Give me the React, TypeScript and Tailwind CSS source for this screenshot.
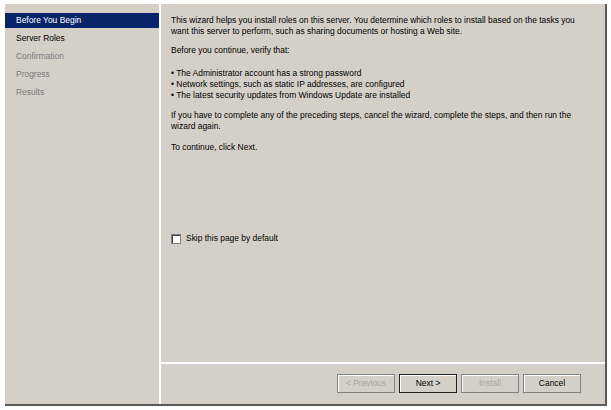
const STEPS = [
  { label: "Before You Begin", state: "active" },
  { label: "Server Roles", state: "normal" },
  { label: "Confirmation", state: "disabled" },
  { label: "Progress", state: "disabled" },
  { label: "Results", state: "disabled" },
];

function WizButton({ label, disabled, isDefault }: { label: string; disabled?: boolean; isDefault?: boolean }) {
  return (
    <div
      className={`w-[58px] h-[19px] flex items-center justify-center bg-[#d4d0c8] ${
        isDefault ? "border border-[#202020]" : "border border-[#808080]"
      } shadow-[inset_1px_1px_0_#ffffff]`}
    >
      <span className={disabled ? "text-[#a8a49c]" : "text-black"}>{label}</span>
    </div>
  );
}

export default function App() {
  return (
    <div
      className="w-[611px] h-[410px] bg-white pt-[4px] pl-[5px] overflow-hidden text-[8.45px] leading-[11px]"
      style={{ fontFamily: '"Liberation Sans", Arial, sans-serif' }}
    >
      <div className="w-[602px] h-[402px] flex bg-[#d4d0c8] border-r-2 border-b-2 border-[#5a5a5a]">
        <aside className="w-[156px] flex flex-col pt-[9px] border-r-2 border-white">
          {STEPS.map((s) => (
            <div
              key={s.label}
              className={`h-[15px] mb-[3px] pl-[11px] flex items-center ${
                s.state === "active" ? "bg-[#0a246a] text-white" : s.state === "disabled" ? "text-[#7a7a7a]" : "text-black"
              }`}
            >
              {s.label}
            </div>
          ))}
        </aside>
        <main className="flex-1 flex flex-col">
          <div className="flex-1 flex flex-col pl-[10px] pt-[11px] text-black">
            <p className="whitespace-nowrap">
              This wizard helps you install roles on this server. You determine which roles to install based on the tasks you
              <br />
              want this server to perform, such as sharing documents or hosting a Web site.
            </p>
            <p className="mt-[8px]">Before you continue, verify that:</p>
            <ul className="mt-[12px]">
              <li>• The Administrator account has a strong password</li>
              <li>• Network settings, such as static IP addresses, are configured</li>
              <li>• The latest security updates from Windows Update are installed</li>
            </ul>
            <p className="mt-[9px] whitespace-nowrap">
              If you have to complete any of the preceding steps, cancel the wizard, complete the steps, and then run the
              <br />
              wizard again.
            </p>
            <p className="mt-[10px]">To continue, click Next.</p>
            <label className="mt-[80px] flex items-center gap-[5px]">
              <span className="w-[10px] h-[10px] bg-white border border-[#808080] shadow-[inset_1px_1px_0_#404040]" />
              <span>Skip this page by default</span>
            </label>
          </div>
          <div className="h-[42px] border-t-2 border-white flex items-start justify-end gap-[4px] pt-[10px] pr-[24px]">
            <WizButton label="< Previous" disabled />
            <WizButton label="Next >" isDefault />
            <WizButton label="Install" disabled />
            <WizButton label="Cancel" />
          </div>
        </main>
      </div>
    </div>
  );
}
